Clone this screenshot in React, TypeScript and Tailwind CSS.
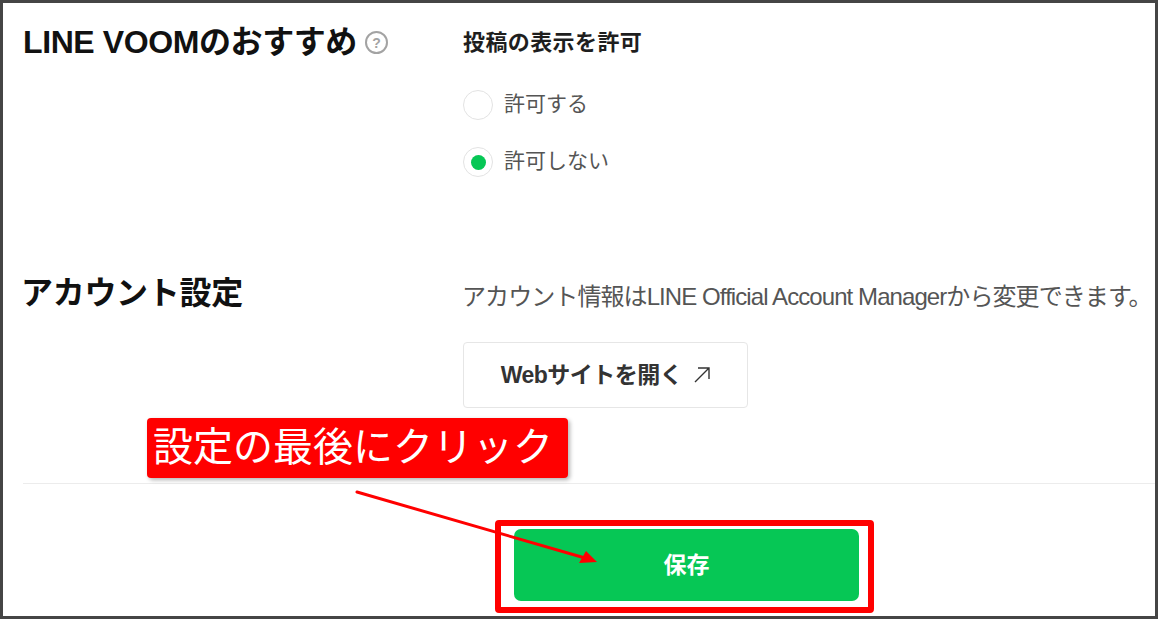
const sans = "font-['Liberation_Sans','Noto_Sans_CJK_JP',sans-serif]";

function Radio({ label, checked }: { label: string; checked?: boolean }) {
  return (
    <div className="flex h-[30px] items-center gap-[11px]">
      <span className="flex size-[30px] shrink-0 items-center justify-center rounded-full border border-[#e3e3e3] bg-white">
        {checked ? <span className="size-[15px] rounded-full bg-[#06c755]" /> : null}
      </span>
      <span className="-mt-[3px] text-[21px] leading-[28px] text-[#555555]">{label}</span>
    </div>
  );
}

export default function App() {
  return (
    <main className={`relative h-[619px] w-[1158px] overflow-hidden border-[3px] border-[#454545] bg-white text-[#111111] ${sans}`}>
      <section className="flex h-[220px] pl-[20px] pt-[19px]">
        <div className="flex w-[440px] shrink-0 items-start">
          <h2 className="whitespace-nowrap text-[32px] font-bold leading-[40px] tracking-[-0.4px]">LINE VOOMのおすすめ</h2>
          <span className="ml-[8px] mt-[9px] flex size-[23px] items-center justify-center rounded-full border-2 border-[#a3a3a3] text-[14px] font-bold leading-none text-[#a3a3a3]">?</span>
        </div>
        <div className="pt-[6px]">
          <p className="text-[22px] font-bold leading-[30px] tracking-[0.4px] text-[#1e1e1e]">投稿の表示を許可</p>
          <div className="mt-[32px] flex flex-col gap-[27px]">
            <Radio label="許可する" />
            <Radio label="許可しない" checked />
          </div>
        </div>
      </section>

      <section className="ml-[20px] flex h-[261px] border-b border-[#ececec] pt-[50px]">
        <h2 className="w-[440px] shrink-0 -indent-[2px] text-[32px] font-bold leading-[40px] tracking-[-0.3px]">アカウント設定</h2>
        <div className="pt-[8px]">
          <p className="-ml-[1px] whitespace-nowrap text-[24px] leading-[32px] tracking-[-0.92px] text-[#555555]">アカウント情報はLINE Official Account Managerから変更できます。</p>
          <button className="mt-[29px] flex h-[66px] w-[285px] items-center justify-center gap-[12px] rounded-[4px] border border-[#e6e6e6] bg-white text-[23px] font-bold tracking-[-0.5px] text-[#333333]">
            Webサイトを開く
            <svg width="16" height="16" viewBox="0 0 16 16" fill="none" stroke="#333333" strokeWidth="1.4">
              <path d="M1 15 L15 1 M4 1 H15 V12" />
            </svg>
          </button>
        </div>
      </section>

      <div className="pl-[511px] pt-[45px]">
        <button className="h-[72px] w-[345px] rounded-[7px] bg-[#06c755] text-[23px] font-bold text-white">保存</button>
      </div>

      {/* annotation on top of the page */}
      <div className="absolute left-[144px] top-[415px] flex h-[60px] w-[421px] items-center whitespace-nowrap rounded-[4px] bg-[#ff0000] pb-[8px] pl-[6px] font-['Noto_Sans_CJK_JP',sans-serif] text-[40px] leading-none text-white shadow-[2px_2px_4px_rgba(0,0,0,0.3)]">
        設定の最後にクリック
      </div>
      <div className="absolute left-[492px] top-[517px] h-[93px] w-[379px] rounded-[4px] border-[6px] border-[#ff0000]" />
      <svg className="absolute left-[350px] top-[485px]" width="250" height="80" viewBox="0 0 250 80" fill="none">
        <line x1="4" y1="4" x2="232" y2="70" stroke="#ff0000" strokeWidth="3" strokeLinecap="round" />
        <path d="M244 74 L226 75 L233 63 Z" fill="#ff0000" />
      </svg>
    </main>
  );
}
